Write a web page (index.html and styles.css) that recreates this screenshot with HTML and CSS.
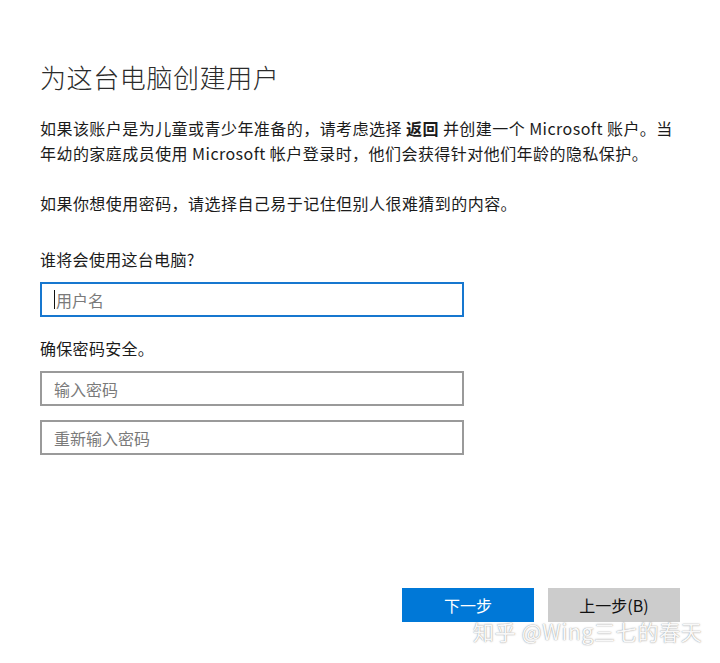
FILE: index.html
```html
<!DOCTYPE html>
<html lang="zh-CN">
<head>
<meta charset="utf-8">
<title>为这台电脑创建用户</title>
<link rel="stylesheet" href="styles.css">
</head>
<body>
<div class="dialog">
  <h1 class="title">为这台电脑创建用户</h1>
  <p class="para para-first">如果该账户是为儿童或青少年准备的，请考虑选择 <b>返回</b> 并创建一个 Microsoft 账户。当<br>年幼的家庭成员使用 Microsoft 帐户登录时，他们会获得针对他们年龄的隐私保护。</p>
  <p class="para para-second">如果你想使用密码，请选择自己易于记住但别人很难猜到的内容。</p>
  <div class="label label-user">谁将会使用这台电脑?</div>
  <div class="field field-focus"><span class="caret"></span><span class="ph">用户名</span></div>
  <div class="label label-pass">确保密码安全。</div>
  <div class="field field-pass"><span class="ph">输入密码</span></div>
  <div class="field field-again"><span class="ph">重新输入密码</span></div>
  <div class="actions">
    <button class="btn btn-primary">下一步</button>
    <button class="btn btn-secondary">上一步(B)</button>
  </div>
  <div class="watermark">知乎 @Wing三七的春天</div>
</div>
</body>
</html>
```

FILE: styles.css
```css
html, body {
  margin: 0;
  padding: 0;
  background: #ffffff;
}

.dialog {
  position: relative;
  width: 720px;
  height: 663px;
  box-sizing: border-box;
  padding: 0 40px;
  display: flex;
  flex-direction: column;
  font-family: "Noto Sans CJK SC", "Noto Sans", sans-serif;
  color: #1b1b1b;
  overflow: hidden;
}

.title {
  margin: 60px 0 0 0;
  font-size: 26px;
  line-height: 34px;
  font-weight: 300;
  color: #2b2b2b;
  letter-spacing: 0.6px;
}

.para {
  margin: 0;
  font-size: 16px;
  line-height: 24.5px;
  letter-spacing: 0.45px;
}

.para b {
  font-weight: 700;
}

.para-first {
  margin-top: 22px;
}

.para-second {
  margin-top: 25.5px;
}

.label {
  font-size: 16px;
  line-height: 24px;
  letter-spacing: 0.3px;
}

.label-user {
  margin-top: 32px;
}

.label-pass {
  margin-top: 19px;
}

.field {
  box-sizing: border-box;
  width: 424px;
  height: 35px;
  border: 2px solid #9a9a9a;
  display: flex;
  align-items: center;
  padding-left: 12px;
  font-size: 16px;
  color: #7a7a7a;
  background: #fff;
}

.field-focus {
  margin-top: 11px;
  border-color: #1777cf;
}

.field-pass {
  margin-top: 11px;
}

.field-again {
  margin-top: 14px;
}

.caret {
  width: 1px;
  height: 19px;
  background: #111;
  margin-right: 1px;
}

.ph {
  line-height: 20px;
}

.actions {
  margin-top: auto;
  margin-bottom: 41px;
  display: flex;
  justify-content: flex-end;
  gap: 14px;
}

.btn {
  width: 132px;
  height: 34px;
  border: none;
  padding: 0;
  font-family: "Noto Sans CJK SC", "Noto Sans", sans-serif;
  font-size: 16px;
}

.btn-primary {
  background: #0078d7;
  color: #ffffff;
}

.btn-secondary {
  background: #cccccc;
  color: #111111;
}

.watermark {
  position: absolute;
  left: 473px;
  top: 617px;
  font-family: "Noto Sans CJK SC", sans-serif;
  font-size: 21px;
  line-height: 28px;
  color: rgba(255, 255, 255, 0.95);
  text-shadow: 0 0 1px rgba(110, 110, 110, 0.7), 0 0 2px rgba(140, 140, 140, 0.45);
  letter-spacing: 0.7px;
  white-space: nowrap;
}
```
